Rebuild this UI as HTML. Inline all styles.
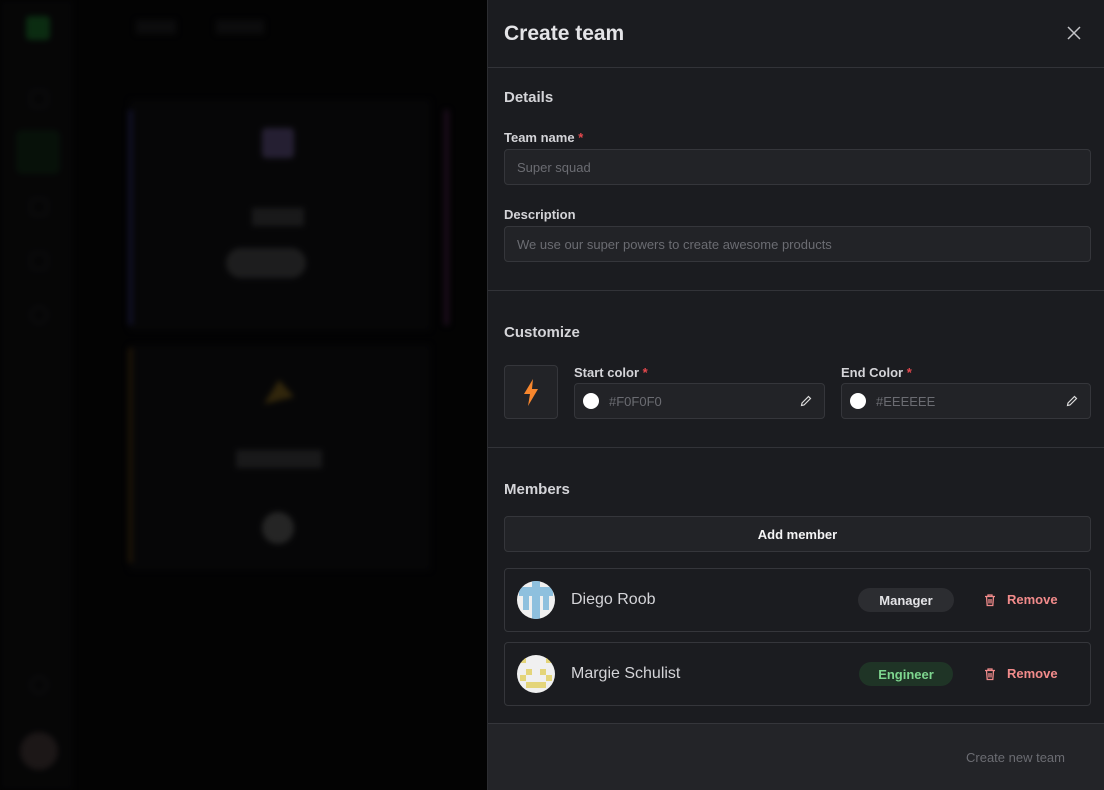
<!DOCTYPE html>
<html><head><style>
*{box-sizing:border-box;margin:0;padding:0}
body{width:1104px;height:790px;background:#060607;font-family:"Liberation Sans",sans-serif;position:relative;overflow:hidden}
.bg{position:absolute;left:0;top:0;width:487px;height:790px;filter:blur(3px)}
.dim{position:absolute;left:0;top:0;width:487px;height:790px;background:rgba(0,0,0,0.45)}
.panel{position:absolute;left:487px;top:0;width:617px;height:790px;background:#1b1c20;border-left:1px solid #2c2d31;color:#e4e4e7}
.hr{position:absolute;left:0;right:0;height:1px;background:#323338}
.t{position:absolute;font-weight:bold}
.inp{position:absolute;background:#222327;border:1px solid #35363b;border-radius:4px;color:#6b6c72;font-size:13px;padding-left:12px;display:flex;align-items:center}
.card{position:absolute;left:16px;width:587px;height:64px;border:1px solid #35363b;border-radius:4px}
.av{position:absolute;left:12px;top:12px;width:38px;height:38px;border-radius:50%;background:#f0f0f0;overflow:hidden}
.nm{position:absolute;left:66px;top:22px;font-size:16px;color:#d4d4d8}
.badge{position:absolute;top:19px;left:353px;width:96px;height:24px;border-radius:12px;font-size:13px;font-weight:bold;display:flex;align-items:center;justify-content:center}
.rm{position:absolute;left:478px;top:23px;font-size:13px;font-weight:bold;color:#f28b8b;display:flex;align-items:center;gap:10px}
.ic{position:absolute;left:30px;width:18px;height:18px;border:2px solid #1c1c1e;border-radius:4px}
</style></head><body>
<div class="bg">
<div style="position:absolute;left:0;top:0;width:72px;height:790px;background:#0b0b0c;border-right:1px solid #111113"></div>
<div style="position:absolute;left:26px;top:16px;width:24px;height:24px;background:#155020;border-radius:4px"></div>
<div class="ic" style="top:90px"></div>
<div style="position:absolute;left:16px;top:130px;width:44px;height:44px;background:#0e2012;border-radius:6px"></div>
<div class="ic" style="top:198px"></div>
<div class="ic" style="top:252px"></div>
<div class="ic" style="top:306px;border-radius:50%"></div>
<div class="ic" style="top:676px;border-radius:50%"></div>
<div style="position:absolute;left:136px;top:20px;width:40px;height:14px;background:#161618"></div>
<div style="position:absolute;left:216px;top:20px;width:48px;height:14px;background:#161618"></div>
<div style="position:absolute;left:130px;top:100px;width:300px;height:230px;background:#0c0c0e"></div>
<div style="position:absolute;left:128px;top:110px;width:5px;height:215px;background:#1e1e44"></div>
<div style="position:absolute;left:444px;top:110px;width:5px;height:215px;background:#341833"></div>
<div style="position:absolute;left:262px;top:128px;width:32px;height:30px;background:#443a5c;border-radius:4px"></div>
<div style="position:absolute;left:252px;top:208px;width:52px;height:18px;background:#2e2e30"></div>
<div style="position:absolute;left:226px;top:248px;width:80px;height:30px;background:#363637;border-radius:15px"></div>
<div style="position:absolute;left:130px;top:345px;width:300px;height:225px;background:#0c0c0e"></div>
<div style="position:absolute;left:128px;top:348px;width:5px;height:215px;background:#34240e"></div>
<div style="position:absolute;left:264px;top:380px;width:30px;height:24px;background:#5a4616;clip-path:polygon(50% 0,100% 70%,0 100%)"></div>
<div style="position:absolute;left:236px;top:450px;width:86px;height:18px;background:#2e2e30"></div>
<div style="position:absolute;left:262px;top:512px;width:32px;height:32px;background:#444;border-radius:50%"></div>
<div style="position:absolute;left:20px;top:732px;width:38px;height:38px;background:#332a2a;border-radius:50%"></div>
</div>
<div class="dim"></div>
<div class="panel">
<div class="t" style="left:16px;top:22px;font-size:21px;color:#e4e4e7">Create team</div>
<svg style="position:absolute;left:579px;top:26px" width="14" height="14" viewBox="0 0 14 14" stroke="#c4c4c8" stroke-width="1.5"><path d="M1 1L13 13M13 1L1 13"/></svg>
<div class="hr" style="top:67px"></div>
<div class="t" style="left:16px;top:89px;font-size:15px;color:#d4d4d8">Details</div>
<div class="t" style="left:16px;top:130px;font-size:13px;color:#d4d4d8">Team name <span style="color:#e5484d">*</span></div>
<div class="inp" style="left:16px;top:149px;width:587px;height:36px">Super squad</div>
<div class="t" style="left:16px;top:207px;font-size:13px;color:#d4d4d8">Description</div>
<div class="inp" style="left:16px;top:226px;width:587px;height:36px">We use our super powers to create awesome products</div>
<div class="hr" style="top:290px"></div>
<div class="t" style="left:16px;top:324px;font-size:15px;color:#d4d4d8">Customize</div>
<div style="position:absolute;left:16px;top:365px;width:54px;height:54px;background:#222327;border:1px solid #35363b;border-radius:4px">
<svg width="54" height="54" viewBox="0 0 54 54" style="position:absolute;left:-1px;top:-1px"><path d="M29 14 L20 29 H26 L24 41 L34 24 H28 Z" fill="#f7862d"/></svg></div>
<div class="t" style="left:86px;top:365px;font-size:13px;color:#d4d4d8">Start color <span style="color:#e5484d">*</span></div>
<div class="inp" style="left:86px;top:383px;width:251px;height:36px;padding-left:8px"><span style="width:16px;height:16px;border-radius:50%;background:#fff;margin-right:10px"></span>#F0F0F0<svg style="position:absolute;right:12px" width="12" height="12" viewBox="0 0 12 12" fill="none" stroke="#ddd" stroke-width="1.2"><path d="M8.5 1.5l2 2L4 10l-2.5.5L2 8z"/></svg></div>
<div class="t" style="left:353px;top:365px;font-size:13px;color:#d4d4d8">End Color <span style="color:#e5484d">*</span></div>
<div class="inp" style="left:353px;top:383px;width:250px;height:36px;padding-left:8px"><span style="width:16px;height:16px;border-radius:50%;background:#fff;margin-right:10px"></span>#EEEEEE<svg style="position:absolute;right:12px" width="12" height="12" viewBox="0 0 12 12" fill="none" stroke="#ddd" stroke-width="1.2"><path d="M8.5 1.5l2 2L4 10l-2.5.5L2 8z"/></svg></div>
<div class="hr" style="top:447px"></div>
<div class="t" style="left:16px;top:481px;font-size:15px;color:#d4d4d8">Members</div>
<div style="position:absolute;left:16px;top:516px;width:587px;height:36px;background:#222327;border:1px solid #35363b;border-radius:4px;display:flex;align-items:center;justify-content:center;font-size:13px;font-weight:bold;color:#f4f4f5">Add member</div>
<div class="card" style="top:568px">
<div class="av"><div style="position:absolute;left:2px;top:6px;width:34px;height:9px;background:#8ec0de"></div><div style="position:absolute;left:15px;top:0;width:8px;height:38px;background:#8ec0de"></div><div style="position:absolute;left:6px;top:15px;width:6px;height:14px;background:#8ec0de"></div><div style="position:absolute;left:26px;top:15px;width:6px;height:14px;background:#8ec0de"></div></div>
<div class="nm">Diego Roob</div>
<div class="badge" style="background:#2c2d31;color:#e4e4e7;left:353px;width:96px">Manager</div>
<div class="rm"><svg width="14" height="14" viewBox="0 0 14 14" fill="none" stroke="#f28b8b" stroke-width="1.3"><path d="M2 3.5h10M5 3.5V2h4v1.5M3.5 3.5l.7 9h5.6l.7-9M6 6v4.5M8 6v4.5"/></svg>Remove</div>
</div>
<div class="card" style="top:642px">
<div class="av"><div style="position:absolute;left:3px;top:2px;width:6px;height:6px;background:#e4d57a"></div><div style="position:absolute;left:29px;top:2px;width:6px;height:6px;background:#e4d57a"></div><div style="position:absolute;left:9px;top:14px;width:6px;height:6px;background:#e4d57a"></div><div style="position:absolute;left:23px;top:14px;width:6px;height:6px;background:#e4d57a"></div><div style="position:absolute;left:3px;top:20px;width:6px;height:6px;background:#e4d57a"></div><div style="position:absolute;left:29px;top:20px;width:6px;height:6px;background:#e4d57a"></div><div style="position:absolute;left:9px;top:27px;width:20px;height:6px;background:#e4d57a"></div></div>
<div class="nm">Margie Schulist</div>
<div class="badge" style="background:#1f3426;color:#7ed68f;left:354px;width:94px">Engineer</div>
<div class="rm"><svg width="14" height="14" viewBox="0 0 14 14" fill="none" stroke="#f28b8b" stroke-width="1.3"><path d="M2 3.5h10M5 3.5V2h4v1.5M3.5 3.5l.7 9h5.6l.7-9M6 6v4.5M8 6v4.5"/></svg>Remove</div>
</div>
<div style="position:absolute;left:0;top:723px;width:617px;height:67px;background:#232428;border-top:1px solid #35363b"></div>
<div style="position:absolute;left:478px;top:750px;font-size:13px;color:#6b6c72">Create new team</div>
</div>
</body></html>
